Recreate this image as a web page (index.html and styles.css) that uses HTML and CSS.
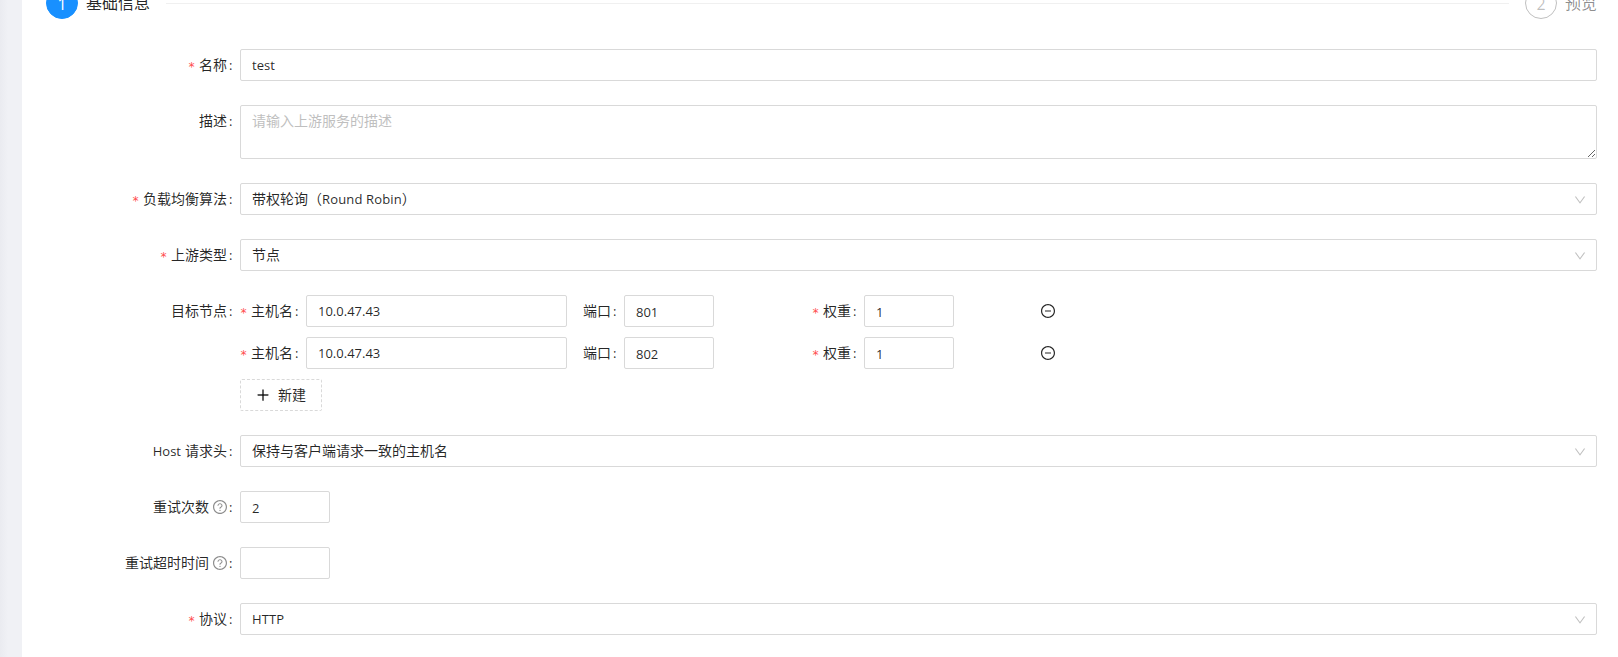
FILE: index.html
```html
<!DOCTYPE html>
<html lang="zh-CN">
<head>
<meta charset="utf-8">
<title>上游</title>
<link rel="stylesheet" href="styles.css">
</head>
<body>
<svg class="sprite" aria-hidden="true">
  <symbol id="down" viewBox="64 64 896 896"><path d="M884 256h-75c-5.1 0-9.9 2.5-12.9 6.6L512 654.2 227.9 262.6c-3-4.1-7.8-6.6-12.9-6.6h-75c-6.5 0-10.3 7.4-6.5 12.7l352.6 486.1c12.8 17.6 39 17.6 51.7 0l352.6-486.1c3.9-5.3.1-12.7-6.4-12.7z"/></symbol>
  <symbol id="minus" viewBox="64 64 896 896"><path d="M696 480H328c-4.4 0-8 3.6-8 8v48c0 4.4 3.6 8 8 8h368c4.4 0 8-3.6 8-8v-48c0-4.4-3.6-8-8-8z"/><path d="M512 64C264.6 64 64 264.6 64 512s200.6 448 448 448 448-200.6 448-448S759.4 64 512 64zm0 820c-205.4 0-372-166.6-372-372s166.6-372 372-372 372 166.6 372 372-166.6 372-372 372z"/></symbol>
  <symbol id="help" viewBox="64 64 896 896"><path d="M512 64C264.6 64 64 264.6 64 512s200.6 448 448 448 448-200.6 448-448S759.4 64 512 64zm0 820c-205.4 0-372-166.6-372-372s166.6-372 372-372 372 166.6 372 372-166.6 372-372 372z"/><path d="M623.6 316.7C593.6 290.4 554 276 512 276s-81.6 14.5-111.6 40.7C369.2 344 352 380.7 352 420v7.6c0 4.4 3.6 8 8 8h48c4.4 0 8-3.6 8-8V420c0-44.1 43.1-80 96-80s96 35.9 96 80c0 31.1-22 59.6-56.1 72.7-21.2 8.1-39.2 22.3-52.1 40.9-13.1 19-19.9 41.8-19.9 64.9V620c0 4.4 3.6 8 8 8h48c4.4 0 8-3.6 8-8v-22.7a48.3 48.3 0 0130.9-44.8c59-22.7 97.1-74.7 97.1-132.5.1-39.3-17.1-76-48.3-103.3zM472 732a40 40 0 1080 0 40 40 0 10-80 0z"/></symbol>
  <symbol id="plus" viewBox="64 64 896 896"><path d="M474 152h76q8 0 8 8v704q0 8-8 8h-76q-8 0-8-8V160q0-8 8-8z"/><path d="M176 466h672q8 0 8 8v76q0 8-8 8H176q-8 0-8-8v-76q0-8 8-8z"/></symbol>
</svg>
<div class="layout">
  <main class="card">
    <div class="steps">
      <div class="step step-active"><span class="step-icon">1</span><span class="step-title">基础信息</span></div>
      <div class="step-line"></div>
      <div class="step"><span class="step-icon">2</span><span class="step-title">预览</span></div>
    </div>
    <form class="form">
      <div class="row">
        <label class="label"><i class="req">*</i>名称<b class="colon">:</b></label>
        <input class="input" value="test">
      </div>
      <div class="row">
        <label class="label">描述<b class="colon">:</b></label>
        <textarea class="input textarea" placeholder="请输入上游服务的描述"></textarea>
      </div>
      <div class="row">
        <label class="label"><i class="req">*</i>负载均衡算法<b class="colon">:</b></label>
        <div class="input select"><span class="value">带权轮询（<span class="latin wide">Round Robin</span>）</span><svg class="arrow"><use href="#down"/></svg></div>
      </div>
      <div class="row">
        <label class="label"><i class="req">*</i>上游类型<b class="colon">:</b></label>
        <div class="input select"><span class="value">节点</span><svg class="arrow"><use href="#down"/></svg></div>
      </div>
      <div class="row">
        <label class="label">目标节点<b class="colon">:</b></label>
        <div class="nodes">
          <div class="node">
            <div class="field"><label class="label"><i class="req">*</i>主机名<b class="colon">:</b></label><input class="input" value="10.0.47.43"></div>
            <div class="field"><label class="label">端口<b class="colon">:</b></label><input class="input number" value="801"></div>
            <div class="field"><label class="label"><i class="req">*</i>权重<b class="colon">:</b></label><input class="input number" value="1"></div>
            <svg class="icon"><use href="#minus"/></svg>
          </div>
          <div class="node">
            <div class="field"><label class="label"><i class="req">*</i>主机名<b class="colon">:</b></label><input class="input" value="10.0.47.43"></div>
            <div class="field"><label class="label">端口<b class="colon">:</b></label><input class="input number" value="802"></div>
            <div class="field"><label class="label"><i class="req">*</i>权重<b class="colon">:</b></label><input class="input number" value="1"></div>
            <svg class="icon"><use href="#minus"/></svg>
          </div>
          <button class="add" type="button"><svg class="icon"><use href="#plus"/></svg><span class="value">新建</span></button>
        </div>
      </div>
      <div class="row">
        <label class="label"><span class="latin host">Host</span>请求头<b class="colon">:</b></label>
        <div class="input select"><span class="value">保持与客户端请求一致的主机名</span><svg class="arrow"><use href="#down"/></svg></div>
      </div>
      <div class="row">
        <label class="label">重试次数<svg class="icon help"><use href="#help"/></svg><b class="colon">:</b></label>
        <input class="input number" value="2">
      </div>
      <div class="row">
        <label class="label">重试超时时间<svg class="icon help"><use href="#help"/></svg><b class="colon">:</b></label>
        <input class="input number" value="">
      </div>
      <div class="row">
        <label class="label"><i class="req">*</i>协议<b class="colon">:</b></label>
        <div class="input select"><span class="latin wide">HTTP</span><svg class="arrow"><use href="#down"/></svg></div>
      </div>
    </form>
  </main>
</div>
</body>
</html>
```
FILE: styles.css
```css
* { box-sizing: border-box; }
body {
  margin: 0;
  height: 657px;
  overflow: hidden;
  color: rgba(0, 0, 0, 0.85);
  font: 14px/22px "Noto Sans CJK SC", "Open Sans", sans-serif;
}
.sprite { position: absolute; width: 0; height: 0; }
.layout {
  height: 657px;
  padding-left: 22px;
  overflow: hidden;
  background: linear-gradient(90deg, #eaebf0, #f0f1f5 8px, #f0f1f6);
}
.card {
  display: flow-root;
  height: 657px;
  padding: 0 21px 0 24px;
  background: #fff;
}
/* the steps bar is scrolled partly past the window's top */
.steps {
  display: flex;
  align-items: center;
  height: 32px;
  margin-top: -13px;
  font-size: 16px;
}
.step { display: flex; align-items: center; gap: 8px; color: rgba(0, 0, 0, 0.45); }
.step-title { padding-bottom: 2px; }
.step-icon {
  width: 32px;
  height: 32px;
  border: 1px solid rgba(0, 0, 0, 0.25);
  border-radius: 50%;
  color: rgba(0, 0, 0, 0.25);
  text-align: center;
  font: 16px/32px "Open Sans", sans-serif;
}
.step-active { color: rgba(0, 0, 0, 0.85); }
.step-active .step-icon { border-color: #1890ff; background: #1890ff; color: #fff; }
.step-line { flex: 1; height: 1px; margin: 0 16px; background: #f0f0f0; }
.form { display: flex; flex-direction: column; gap: 24px; margin-top: 30px; }
.row { display: grid; grid-template-columns: 194px 1fr; align-items: start; }
.label {
  display: flex;
  align-items: center;
  justify-content: flex-end;
  height: 30px;
  white-space: nowrap;
}
.colon {
  width: 3px;
  margin: 2px 8px 0 2px;
  font: 13px/22px "Open Sans", sans-serif;
}
.req {
  width: 7px;
  margin: 5px 4px 0 0;
  color: #ff4d4f;
  font: 12px/22px "DejaVu Sans Mono", monospace;
}
.latin { font: 13px/22px "Open Sans", sans-serif; }
.wide { letter-spacing: 0.15px; }
.host { margin: 2px 4px 0 0; }
.input {
  width: 100%;
  height: 32px;
  margin: 0;
  padding: 4px 11px;
  border: 1px solid #d9d9d9;
  border-radius: 2px;
  outline: 0;
  background: #fff;
  color: rgba(0, 0, 0, 0.85);
  font: 13px/22px "Open Sans", sans-serif;
}
.textarea {
  display: block;
  height: 54px;
  padding-top: 3px;
  resize: vertical;
  font: 14px/22px "Noto Sans CJK SC", sans-serif;
}
.textarea::placeholder { color: #bfbfbf; }
.select {
  display: flex;
  align-items: center;
  justify-content: space-between;
  padding-right: 10px;
  font: 14px/22px "Noto Sans CJK SC", sans-serif;
}
.value { padding-bottom: 2px; }
.arrow { width: 12px; height: 12px; margin-top: 1px; fill: rgba(0, 0, 0, 0.25); }
.number { width: 90px; padding: 6px 11px 4px; }
.nodes { display: flex; flex-direction: column; align-items: flex-start; gap: 10px; }
.node {
  display: grid;
  grid-template-columns: 327px 213px 213px 14px;
  column-gap: 16px;
  align-items: center;
}
.field { display: flex; }
.icon { width: 14px; height: 14px; fill: currentColor; }
.help { margin: 1px 0 0 4px; color: rgba(0, 0, 0, 0.45); }
.add {
  display: flex;
  align-items: center;
  gap: 8px;
  height: 32px;
  padding: 0 15px;
  border: 1px dashed #d9d9d9;
  border-radius: 2px;
  background: #fff;
  color: rgba(0, 0, 0, 0.85);
  font: 14px/22px "Noto Sans CJK SC", sans-serif;
}
```
